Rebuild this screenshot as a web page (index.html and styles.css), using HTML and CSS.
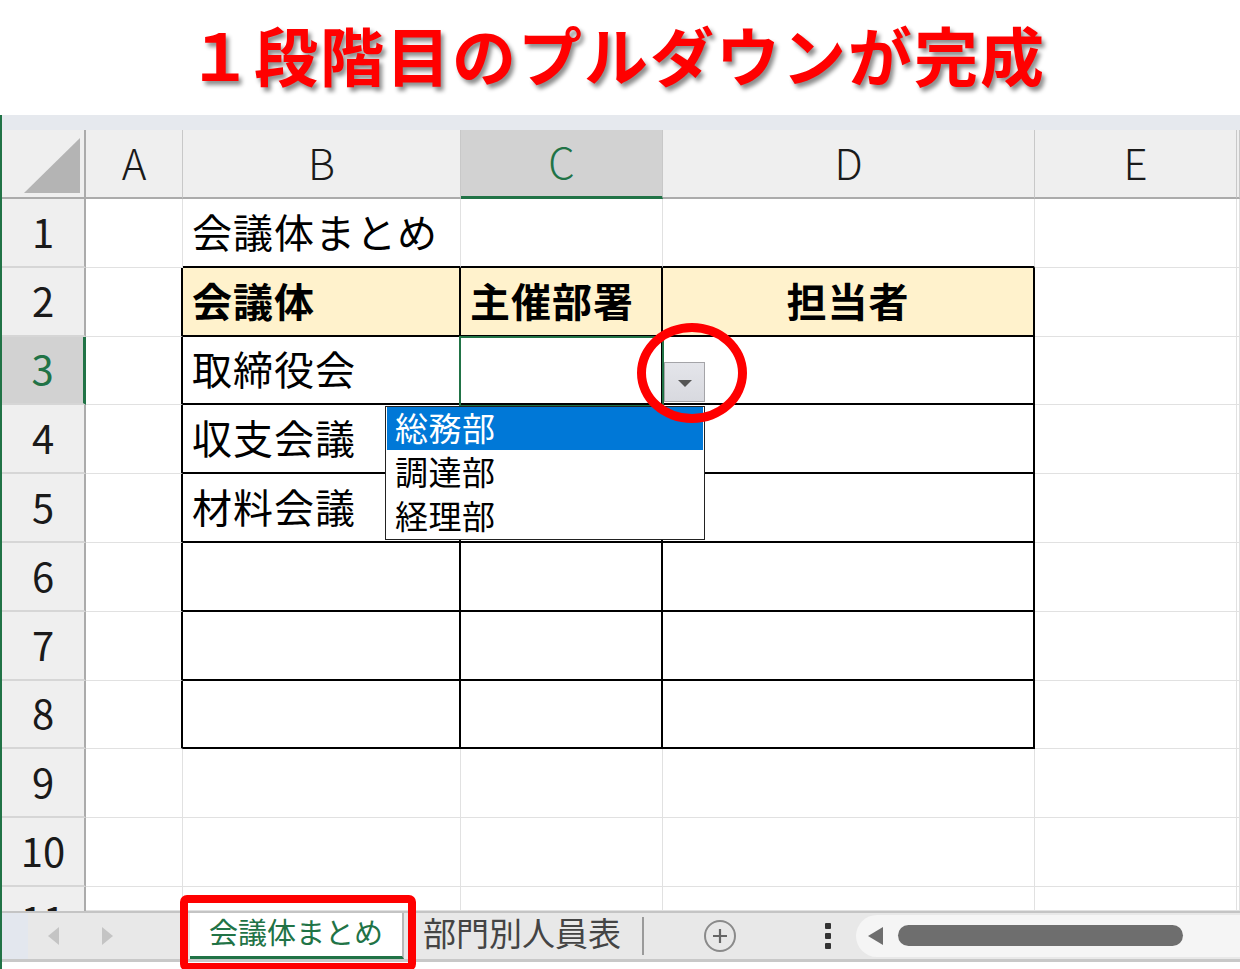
FILE: index.html
```html
<!DOCTYPE html>
<html lang="ja">
<head>
<meta charset="utf-8">
<title>1段階目のプルダウンが完成</title>
<link rel="stylesheet" href="styles.css">
</head>
<body>
<header class="title">１段階目のプルダウンが完成</header>
<main class="sheet">
  <div class="band"></div>
  <div class="grid-wrap">
    <div class="grid">
      <div class="corner"><svg width="84" height="67" viewBox="0 0 84 67"><polygon points="78,8 78,63 22,63" fill="#b4b4b4"/></svg></div>
      <div class="ch">A</div><div class="ch">B</div><div class="ch sel">C</div><div class="ch">D</div><div class="ch">E</div><div class="ch"></div>

      <div class="rh">1</div><div class="c"></div><div class="c bb txt">会議体まとめ</div><div class="c bb"></div><div class="c bb"></div><div class="c"></div><div class="c"></div>

      <div class="rh">2</div><div class="c br"></div><div class="c br bb hd txt">会議体</div><div class="c br bb hd txt">主催部署</div><div class="c br bb hd mid">担当者</div><div class="c"></div><div class="c"></div>

      <div class="rh sel">3</div><div class="c br"></div><div class="c br bb txt">取締役会</div><div class="c br bb"></div><div class="c br bb"></div><div class="c"></div><div class="c"></div>

      <div class="rh">4</div><div class="c br"></div><div class="c br bb txt">収支会議</div><div class="c br bb"></div><div class="c br bb"></div><div class="c"></div><div class="c"></div>

      <div class="rh">5</div><div class="c br"></div><div class="c br bb txt">材料会議</div><div class="c br bb"></div><div class="c br bb"></div><div class="c"></div><div class="c"></div>

      <div class="rh">6</div><div class="c br"></div><div class="c br bb"></div><div class="c br bb"></div><div class="c br bb"></div><div class="c"></div><div class="c"></div>

      <div class="rh">7</div><div class="c br"></div><div class="c br bb"></div><div class="c br bb"></div><div class="c br bb"></div><div class="c"></div><div class="c"></div>

      <div class="rh">8</div><div class="c br"></div><div class="c br bb"></div><div class="c br bb"></div><div class="c br bb"></div><div class="c"></div><div class="c"></div>

      <div class="rh">9</div><div class="c"></div><div class="c"></div><div class="c"></div><div class="c"></div><div class="c"></div><div class="c"></div>

      <div class="rh">10</div><div class="c"></div><div class="c"></div><div class="c"></div><div class="c"></div><div class="c"></div><div class="c"></div>

      <div class="rh clip"><span>11</span></div><div class="c"></div><div class="c"></div><div class="c"></div><div class="c"></div><div class="c"></div><div class="c"></div>
    </div>

    <div class="selbox"></div>
    <div class="ddbtn"><span class="ddtri"></span></div>
    <ul class="ddlist">
      <li class="on">総務部</li>
      <li>調達部</li>
      <li>経理部</li>
    </ul>
    <div class="ring"></div>
  </div>

  <footer class="tabs">
    <div class="nav"><span class="tri-l"></span><span class="tri-r"></span></div>
    <div class="tab active">会議体まとめ<span class="mark"></span></div>
    <div class="tab other">部門別人員表</div>
    <div class="sep"></div>
    <div class="plus"><svg width="34" height="34" viewBox="0 0 34 34"><circle cx="17" cy="17" r="15" fill="none" stroke="#8a8a8a" stroke-width="2"/><path d="M17 10v14M10 17h14" stroke="#666" stroke-width="2.2"/></svg></div>
    <div class="dots"><i></i><i></i><i></i></div>
    <div class="scroll"><span class="stri"></span><span class="thumb"></span></div>
  </footer>
</main>
</body>
</html>
```
FILE: styles.css
```css
* { box-sizing: border-box; }
html, body { margin: 0; padding: 0; }
body {
  width: 1240px;
  height: 969px;
  overflow: hidden;
  background: #ffffff;
  font-family: "Noto Sans CJK JP", "Noto Sans", sans-serif;
  color: #000;
}

.title {
  height: 115px;
  display: flex;
  align-items: center;
  justify-content: center;
  padding-bottom: 10px;
  padding-right: 6px;
  font-size: 64px;
  font-weight: 700;
  line-height: 1;
  letter-spacing: 2px;
  color: #ff0000;
  text-shadow: 3px 4px 4px rgba(0, 0, 0, 0.45);
}

.sheet {
  border-left: 2px solid #217346;
  height: 854px;
  background: #fff;
}

.band {
  height: 15px;
  background: #e6e9ee;
}

.grid-wrap {
  position: relative;
}

.grid {
  display: grid;
  grid-template-columns: 84px 97px 278px 202px 372px 202px 1fr;
  grid-template-rows: 69px repeat(10, 68.8px) 24px;
  font-size: 40px;
  line-height: 1;
}

.corner {
  background: #efefef;
  border-right: 2px solid #ababab;
  border-bottom: 2px solid #ababab;
}
.corner svg { display: block; }

.ch {
  background: #efefef;
  border-right: 1px solid #c8c8c8;
  border-bottom: 2px solid #ababab;
  display: flex;
  align-items: center;
  justify-content: center;
  color: #1a1a1a;
  font-size: 42px;
  font-weight: 300;
  padding-bottom: 4px;
}
.ch.sel {
  background: #d2d2d2;
  color: #217346;
  border-bottom: 3px solid #217346;
}

.rh {
  background: #efefef;
  border-right: 2px solid #ababab;
  border-bottom: 2px solid #d6d6d6;
  display: flex;
  align-items: center;
  justify-content: center;
  color: #1a1a1a;
  font-size: 40px;
  padding-bottom: 3px;
}
.rh.sel {
  background: #d2d2d2;
  color: #217346;
  border-right: 3px solid #217346;
}
.rh.clip {
  align-items: flex-start;
  overflow: hidden;
  border-bottom: none;
  padding-bottom: 0;
}
.rh.clip span {
  display: block;
  padding-top: 12px;
}

.c {
  border-right: 1px solid #e1e1e1;
  border-bottom: 1px solid #e1e1e1;
  display: flex;
  align-items: center;
  overflow: hidden;
  white-space: nowrap;
}
.c.br { border-right: 2px solid #000; }
.c.bb { border-bottom: 2px solid #000; }
.c.txt {
  padding-left: 9px;
  letter-spacing: 1px;
  padding-bottom: 3px;
}
.c.hd {
  background: #fff2cc;
  font-weight: 700;
}
.c.mid {
  justify-content: center;
  letter-spacing: 1px;
  padding-bottom: 3px;
}

/* selected cell outline C3 */
.selbox {
  position: absolute;
  left: 457px;
  top: 206px;
  width: 205px;
  height: 71px;
  border: 2px solid #217346;
}

/* dropdown arrow button */
.ddbtn {
  position: absolute;
  left: 662px;
  top: 232px;
  width: 41px;
  height: 40px;
  background: linear-gradient(#e4e5ea, #d8d9df);
  border: 1px solid #a4a4a8;
  display: flex;
  align-items: center;
  justify-content: center;
}
.ddtri {
  width: 0;
  height: 0;
  border-left: 7px solid transparent;
  border-right: 7px solid transparent;
  border-top: 7px solid #555;
  margin-top: 2px;
}

/* dropdown list */
.ddlist {
  position: absolute;
  left: 383px;
  top: 276px;
  width: 320px;
  height: 134px;
  margin: 0;
  padding: 0;
  list-style: none;
  background: #fff;
  border: 1px solid #222;
  font-size: 33px;
  line-height: 1;
}
.ddlist li {
  height: 44px;
  display: flex;
  align-items: center;
  padding-left: 9px;
  padding-bottom: 2px;
  color: #000;
  letter-spacing: 0.5px;
}
.ddlist li.on {
  background: #0078d7;
  color: #fff;
  height: 43px;
  margin: 0 1px;
  padding-left: 8px;
}

/* red annotation ring */
.ring {
  position: absolute;
  left: 635px;
  top: 193px;
  width: 110px;
  height: 100px;
  border: 9px solid #ff0000;
  border-radius: 50%;
}

/* sheet tabs bar */
.tabs {
  height: 51px;
  display: flex;
  align-items: center;
  background: #e8e8e8;
  border-top: 2px solid #c4c4c4;
  border-bottom: 3px solid #c8c8c8;
}

.nav {
  width: 178px;
  height: 100%;
  display: flex;
  align-items: center;
  padding-left: 46px;
  gap: 43px;
  background: linear-gradient(90deg, #e3e7ee 0, #e3e7ee 26px, #e8e8e8 26px);
}
.tri-l, .tri-r {
  width: 0;
  height: 0;
  border-top: 9px solid transparent;
  border-bottom: 9px solid transparent;
}
.tri-l { border-right: 11px solid #c4c4c4; }
.tri-r { border-left: 11px solid #c4c4c4; }

.tab {
  height: 100%;
  display: flex;
  align-items: center;
  white-space: nowrap;
}
.tab.active {
  position: relative;
  margin-left: 10px;
  width: 214px;
  justify-content: center;
  background: #fff;
  color: #217346;
  font-size: 29px;
  border-bottom: 3px solid #217346;
  border-right: 2px solid #b8b8b8;
  padding-bottom: 6px;
}
.tab .mark {
  position: absolute;
  left: -10px;
  top: -18px;
  width: 236px;
  height: 76px;
  border: 8px solid #ff0000;
  border-radius: 7px;
}
.tab.other {
  margin-left: 19px;
  width: 200px;
  color: #444;
  font-size: 33px;
  padding-bottom: 8px;
}

.sep {
  margin-left: 19px;
  width: 2px;
  height: 38px;
  background: #9a9a9a;
}

.plus {
  margin-left: 59px;
  width: 34px;
  height: 34px;
}
.plus svg { display: block; }

.dots {
  margin-left: 88px;
  width: 6px;
  display: flex;
  flex-direction: column;
  gap: 4px;
}
.dots i {
  display: block;
  width: 6px;
  height: 6px;
  border-radius: 1px;
  background: #333;
}

.scroll {
  margin-left: 25px;
  flex: 1;
  height: 42px;
  background: #f5f5f5;
  border-radius: 22px 0 0 22px;
  display: flex;
  align-items: center;
  padding-left: 12px;
}
.stri {
  width: 0;
  height: 0;
  border-top: 9px solid transparent;
  border-bottom: 9px solid transparent;
  border-right: 15px solid #6e6e6e;
}
.thumb {
  margin-left: 15px;
  width: 285px;
  height: 21px;
  border-radius: 11px;
  background: #6e6e6e;
}
```
